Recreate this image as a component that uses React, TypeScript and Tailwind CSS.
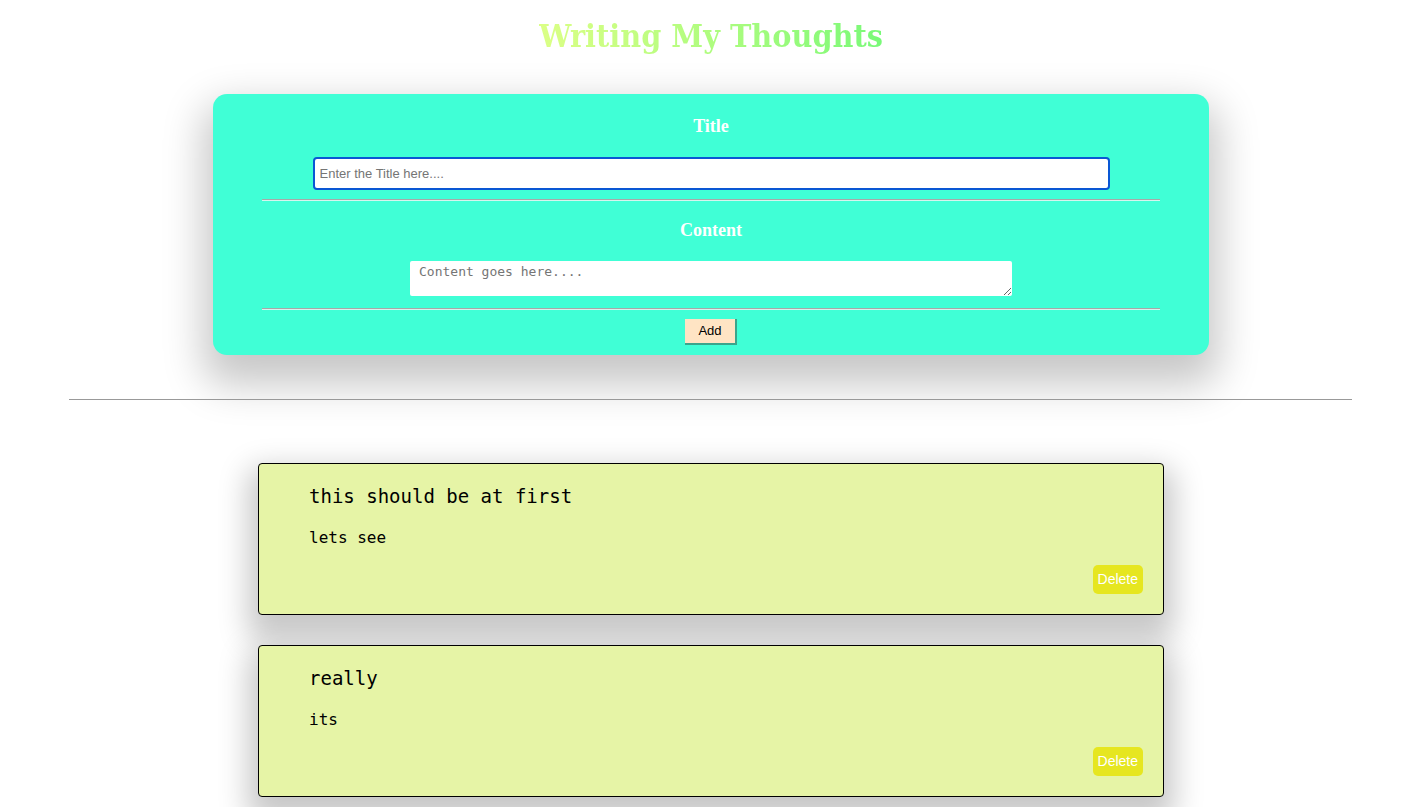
import React from 'react';

const notes = [
  { title: 'this should be at first', content: 'lets see' },
  { title: 'really', content: 'its' },
];

function NoteCard({ title, content }: { title: string; content: string }) {
  return (
    <div className="w-[906px] h-[152px] mx-auto mb-[30px] rounded-[4px] border border-black bg-[#e6f4a6] shadow-[0_15px_30px_10px_rgba(0,0,0,0.22)] flex flex-col px-[50px] pt-[20px] relative">
      <h2 className="font-['DejaVu_Sans_Mono',monospace] text-[19px] text-black leading-[24px]">{title}</h2>
      <p className="font-['DejaVu_Sans_Mono',monospace] text-[16px] text-black mt-[20px] leading-[20px]">{content}</p>
      <button className="absolute right-[20px] bottom-[20px] h-[29px] px-[5px] rounded-[5px] bg-[#e6e620] text-white text-[14px] font-['Liberation_Sans',Arial,sans-serif]">
        Delete
      </button>
    </div>
  );
}

function Rule() {
  return (
    <div className="w-[898px] flex flex-col">
      <div className="h-px bg-[#a8a8a8]" />
      <div className="h-px bg-[#d6f5ee]" />
    </div>
  );
}

export default function App() {
  return (
    <div className="min-h-screen bg-white pb-10 pl-[8px]">
      <h1 className="text-center pt-[14px] font-['DejaVu_Serif',Georgia,serif] font-stretch-condensed font-bold text-[32px] leading-[44px]">
        <span className="bg-gradient-to-r from-[#dbff86] to-[#78f978] bg-clip-text text-transparent">Writing My Thoughts</span>
      </h1>

      <div className="w-[996px] mx-auto mt-[36px] rounded-[14px] bg-[#40ffd6] shadow-[0_20px_40px_10px_rgba(0,0,0,0.22)] flex flex-col items-center pt-[16px] pb-[10px]">
        <label className="text-white font-bold text-[18px] font-['Liberation_Serif',serif] leading-[32px]">Title</label>
        <input
          autoFocus
          placeholder="Enter the Title here...."
          className="mt-[15px] w-[797px] h-[33px] bg-white rounded-[4px] border-2 border-[#0a57d4] px-[5px] text-[13px] font-['Liberation_Sans',Arial,sans-serif] placeholder:text-[#757575] outline-none"
        />
        <div className="mt-[9px]">
          <Rule />
        </div>
        <label className="mt-[13px] text-white font-bold text-[18px] font-['Liberation_Serif',serif] leading-[32px]">Content</label>
        <textarea
          placeholder="Content goes here...."
          className="mt-[15px] w-[602px] h-[35px] bg-white rounded-[2px] px-[9px] py-[1px] text-[13px] font-['DejaVu_Sans_Mono',monospace] placeholder:text-[#757575] resize-y outline-none"
        />
        <div className="mt-[12px]">
          <Rule />
        </div>
        <button className="mt-[9px] w-[52px] h-[26px] bg-[#ffe4c4] text-black text-[13px] font-['Liberation_Sans',Arial,sans-serif] border-r-2 border-b-2 border-[#3aa58c]">
          Add
        </button>
      </div>

      <hr className="ml-[61px] mr-[62px] mt-[44px] border-0 border-t border-[#999]" />

      <div className="mt-[63px]">
        {notes.map((n) => (
          <NoteCard key={n.title} title={n.title} content={n.content} />
        ))}
      </div>
    </div>
  );
}
